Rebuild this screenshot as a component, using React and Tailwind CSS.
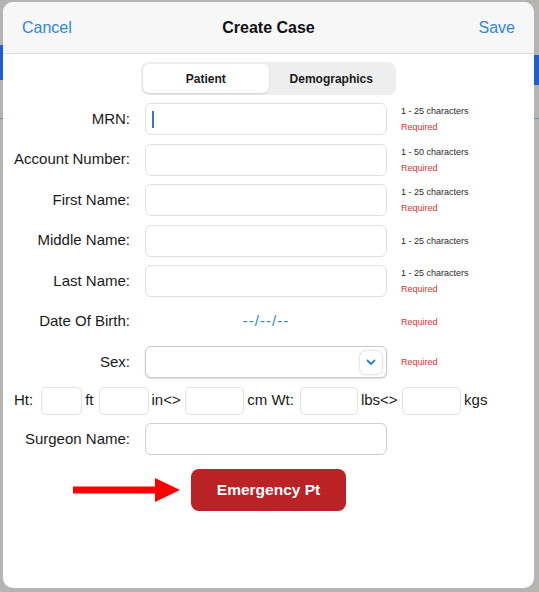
import React from 'react';

const font = { fontFamily: '"Liberation Sans", Arial, sans-serif' };

const rows = [
  { label: 'MRN:', hint: '1 - 25 characters', required: true, cursor: true },
  { label: 'Account Number:', hint: '1 - 50 characters', required: true },
  { label: 'First Name:', hint: '1 - 25 characters', required: true },
  { label: 'Middle Name:', hint: '1 - 25 characters', required: false },
  { label: 'Last Name:', hint: '1 - 25 characters', required: true },
];

const Hint = ({ hint, required }) => (
  <div className="ml-[14px] flex flex-col justify-center text-[9px] leading-[16px]">
    {hint && <span className="text-[#2a2a2a]">{hint}</span>}
    {required && <span className="text-[#d6322f]">Required</span>}
  </div>
);

const Row = ({ label, children, hint, required }) => (
  <div className="flex h-[32px] items-center">
    <div className="w-[127px] text-right text-[15px] text-[#1a1a1a]">{label}</div>
    <div className="ml-[15px] w-[242px] h-full">{children}</div>
    <Hint hint={hint} required={required} />
  </div>
);

const Box = ({ w }) => (
  <div className={`${w} h-[28px] rounded-[5px] border border-[#e2e2e2] bg-white`} />
);

export default function App() {
  return (
    <div style={font} className="relative w-[539px] h-[592px] bg-[#b4b5b3] pt-[2px] pl-[3px] overflow-hidden">
      {/* app behind the sheet */}
      <div className="absolute left-0 top-[45px] w-[3px] h-[35px] bg-[#1f5fc8]" />
      <div className="absolute right-0 top-[55px] w-[5px] h-[30px] bg-[#1f5fc8]" />
      <div className="absolute left-0 top-[118px] w-[3px] h-[1px] bg-[#6f8fb0]" />
      <div className="absolute right-0 top-[118px] w-[5px] h-[1px] bg-[#6f8fb0]" />

      <div className="relative w-[531px] h-[586px] rounded-[10px] bg-white overflow-hidden">
        <div className="grid grid-cols-3 items-center h-[52px] px-[19px] bg-[#f7f7f7] border-b border-[#dcdcdc] text-[16px]">
          <span className="text-[#2f86df]">Cancel</span>
          <span className="text-center font-bold text-[#111]">Create Case</span>
          <span className="text-right text-[#2f86df]">Save</span>
        </div>

        <div className="flex justify-center mt-[8px]">
          <div className="flex w-[255px] h-[33px] rounded-[8px] bg-[#eeeeef] p-[2px] text-[12px] font-bold text-[#1a1a1a]">
            <div className="flex-1 flex items-center justify-center rounded-[6px] bg-white shadow-[0_1px_2px_rgba(0,0,0,0.12)]">
              Patient
            </div>
            <div className="flex-1 flex items-center justify-center">Demographics</div>
          </div>
        </div>

        <div className="mt-[8px] flex flex-col gap-[8.5px]">
          {rows.map((r) => (
            <Row key={r.label} label={r.label} hint={r.hint} required={r.required}>
              <div className="h-full rounded-[6px] border border-[#e0e0e0] bg-white flex items-center pl-[6px]">
                {r.cursor && <div className="w-[2px] h-[17px] bg-[#3a6fd8]" />}
              </div>
            </Row>
          ))}

          <Row label="Date Of Birth:" required>
            <div className="h-full flex items-center justify-center text-[15px] tracking-[1px] text-[#2f86df]">
              --/--/--
            </div>
          </Row>

          <Row label="Sex:" required>
            <div className="h-full rounded-[6px] border border-[#c9c9c9] bg-white shadow-[0_1px_2px_rgba(0,0,0,0.15)] flex items-center justify-end pr-[4px]">
              <div className="w-[22px] h-[23px] rounded-[6px] bg-white shadow-[0_0_3px_rgba(0,0,0,0.25)] flex items-center justify-center">
                <svg width="10" height="7" viewBox="0 0 10 7">
                  <path d="M1.5 1.5 L5 5 L8.5 1.5" fill="none" stroke="#2f7fd8" strokeWidth="1.8" strokeLinecap="round" strokeLinejoin="round" />
                </svg>
              </div>
            </div>
          </Row>

          <div className="flex h-[28px] items-center pl-[11px] text-[15px] text-[#1a1a1a]">
            <span>Ht:</span>
            <div className="ml-[8px]"><Box w="w-[41px]" /></div>
            <span className="ml-[3px]">ft</span>
            <div className="ml-[5px]"><Box w="w-[50px]" /></div>
            <span className="ml-[3px]">in&lt;&gt;</span>
            <div className="ml-[4.5px]"><Box w="w-[59px]" /></div>
            <span className="ml-[3px]">cm Wt:</span>
            <div className="ml-[6px]"><Box w="w-[58px]" /></div>
            <span className="ml-[3px]">lbs&lt;&gt;</span>
            <div className="ml-[4.5px]"><Box w="w-[59px]" /></div>
            <span className="ml-[3px]">kgs</span>
          </div>

          <Row label="Surgeon Name:">
            <div className="h-full rounded-[6px] border border-[#cfcfcf] bg-white" />
          </Row>
        </div>

        <div className="relative mt-[14px] flex justify-center">
          <svg className="absolute left-[70px] top-[9px]" width="108" height="24" viewBox="0 0 108 24">
            <rect x="0" y="8.5" width="84" height="7" fill="#ff0000" />
            <polygon points="82,0 107,12 82,24" fill="#ff0000" />
          </svg>
          <button className="w-[155px] h-[42px] rounded-[8px] bg-[#bb2226] text-white font-bold text-[15.5px]">
            Emergency Pt
          </button>
        </div>
      </div>
    </div>
  );
}
